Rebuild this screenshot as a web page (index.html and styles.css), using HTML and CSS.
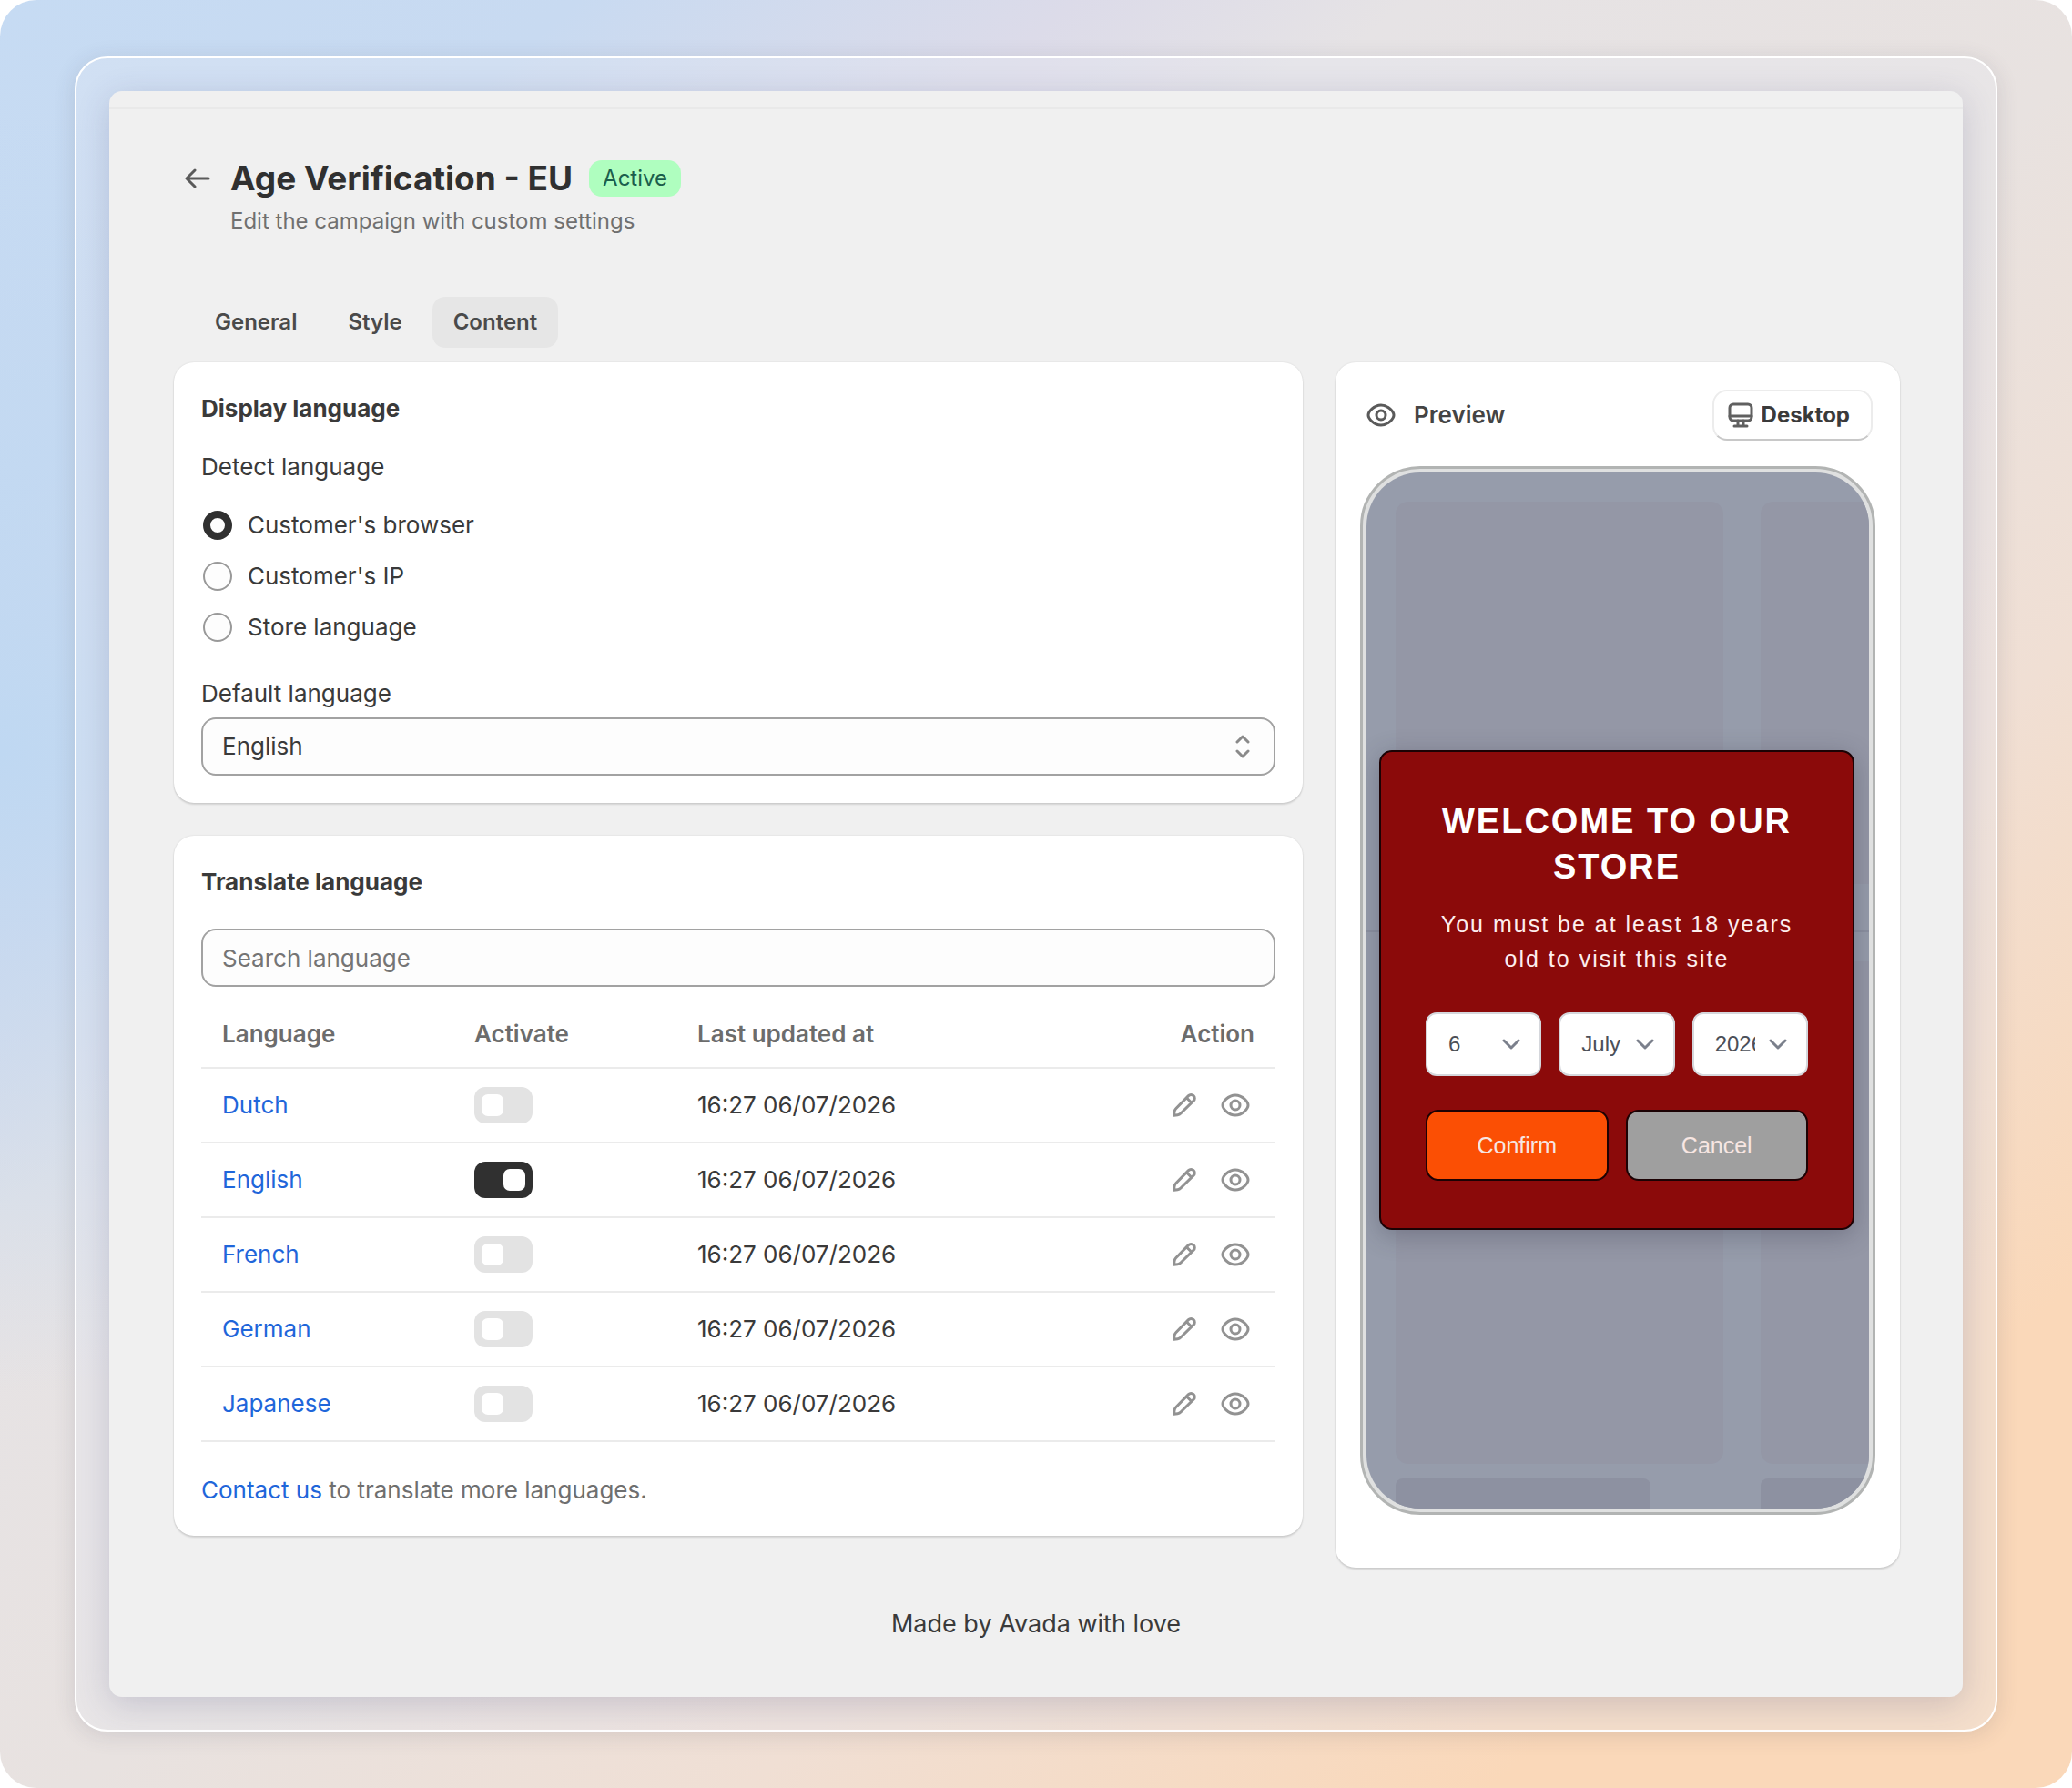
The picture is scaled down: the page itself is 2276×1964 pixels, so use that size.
FILE: index.html
```html
<!DOCTYPE html>
<html lang="en">
<head>
    <meta charset="UTF-8">
    <meta name="viewport" content="width=device-width, initial-scale=1.0">
    <title>Age Verification - EU</title>
    <link rel="stylesheet" href="styles.css">
</head>
<body>
    <!-- shared icons -->
    <svg class="sprite" width="0" height="0" aria-hidden="true">
        <symbol id="icon-eye" viewBox="0 0 32 26">
            <path d="M16 2C8 2 2 9.500 2 13s6 11 14 11 14-7.500 14-11S24 2 16 2z"/>
            <circle cx="16" cy="13" r="5"/>
        </symbol>
        <symbol id="icon-pencil" viewBox="0 0 28 28">
            <path d="M18.500 3.600a3.900 3.900 0 0 1 5.600 0 3.900 3.900 0 0 1 0 5.600L10 23c-1 1-2 1.500-3.400 1.700L2.500 25.300l.5-4.100c.2-1.400.7-2.400 1.700-3.400zM16.500 6l5.300 5.300"/>
        </symbol>
        <symbol id="icon-chevron" viewBox="0 0 20 12">
            <path d="M2 2l8 8 8-8"/>
        </symbol>
    </svg>

    <div class="backdrop">
        <div class="frame">
            <main class="window">
                <div class="top-bar"></div>

                <header class="page-header">
                    <a href="#" class="back" aria-label="Back">
                        <svg width="28" height="24" viewBox="0 0 28 24"><path d="M26 12H3M11 3l-9 9 9 9"/></svg>
                    </a>
                    <div>
                        <div class="title-row">
                            <h1>Age Verification - EU</h1>
                            <span class="badge">Active</span>
                        </div>
                        <p class="subtitle">Edit the campaign with custom settings</p>
                    </div>
                </header>

                <nav class="tabs">
                    <button type="button" class="tab">General</button>
                    <button type="button" class="tab">Style</button>
                    <button type="button" class="tab active">Content</button>
                </nav>

                <div class="layout">
                    <div class="settings">
                        <section class="card">
                            <h2>Display language</h2>
                            <fieldset class="choices">
                                <legend>Detect language</legend>
                                <label class="choice"><input type="radio" name="detect" checked>Customer's browser</label>
                                <label class="choice"><input type="radio" name="detect">Customer's IP</label>
                                <label class="choice"><input type="radio" name="detect">Store language</label>
                            </fieldset>
                            <label class="field-label" for="default-language">Default language</label>
                            <div class="select-wrap">
                                <select id="default-language" class="field">
                                    <option>English</option>
                                    <option>Dutch</option>
                                    <option>French</option>
                                    <option>German</option>
                                    <option>Japanese</option>
                                </select>
                                <svg class="select-arrows" width="18" height="26" viewBox="0 0 18 26"><path d="M3 8l6-6 6 6M3 18l6 6 6-6"/></svg>
                            </div>
                        </section>

                        <section class="card">
                            <h2>Translate language</h2>
                            <input type="text" class="field search" placeholder="Search language" aria-label="Search language">
                            <table class="languages">
                                <thead>
                                    <tr>
                                        <th class="col-language">Language</th>
                                        <th class="col-activate">Activate</th>
                                        <th>Last updated at</th>
                                        <th class="col-action">Action</th>
                                    </tr>
                                </thead>
                                <tbody>
                                    <tr>
                                        <td><a href="#">Dutch</a></td>
                                        <td><input type="checkbox" class="switch" aria-label="Activate Dutch"></td>
                                        <td>16:27 06/07/2026</td>
                                        <td>
                                            <div class="actions">
                                                <button type="button" aria-label="Edit Dutch"><svg class="pencil"><use href="#icon-pencil"/></svg></button>
                                                <button type="button" aria-label="View Dutch"><svg class="eye"><use href="#icon-eye"/></svg></button>
                                            </div>
                                        </td>
                                    </tr>
                                    <tr>
                                        <td><a href="#">English</a></td>
                                        <td><input type="checkbox" class="switch" aria-label="Activate English" checked></td>
                                        <td>16:27 06/07/2026</td>
                                        <td>
                                            <div class="actions">
                                                <button type="button" aria-label="Edit English"><svg class="pencil"><use href="#icon-pencil"/></svg></button>
                                                <button type="button" aria-label="View English"><svg class="eye"><use href="#icon-eye"/></svg></button>
                                            </div>
                                        </td>
                                    </tr>
                                    <tr>
                                        <td><a href="#">French</a></td>
                                        <td><input type="checkbox" class="switch" aria-label="Activate French"></td>
                                        <td>16:27 06/07/2026</td>
                                        <td>
                                            <div class="actions">
                                                <button type="button" aria-label="Edit French"><svg class="pencil"><use href="#icon-pencil"/></svg></button>
                                                <button type="button" aria-label="View French"><svg class="eye"><use href="#icon-eye"/></svg></button>
                                            </div>
                                        </td>
                                    </tr>
                                    <tr>
                                        <td><a href="#">German</a></td>
                                        <td><input type="checkbox" class="switch" aria-label="Activate German"></td>
                                        <td>16:27 06/07/2026</td>
                                        <td>
                                            <div class="actions">
                                                <button type="button" aria-label="Edit German"><svg class="pencil"><use href="#icon-pencil"/></svg></button>
                                                <button type="button" aria-label="View German"><svg class="eye"><use href="#icon-eye"/></svg></button>
                                            </div>
                                        </td>
                                    </tr>
                                    <tr>
                                        <td><a href="#">Japanese</a></td>
                                        <td><input type="checkbox" class="switch" aria-label="Activate Japanese"></td>
                                        <td>16:27 06/07/2026</td>
                                        <td>
                                            <div class="actions">
                                                <button type="button" aria-label="Edit Japanese"><svg class="pencil"><use href="#icon-pencil"/></svg></button>
                                                <button type="button" aria-label="View Japanese"><svg class="eye"><use href="#icon-eye"/></svg></button>
                                            </div>
                                        </td>
                                    </tr>
                                </tbody>
                            </table>
                            <p class="help"><a href="#">Contact us</a> to translate more languages.</p>
                        </section>
                    </div>

                    <section class="card preview">
                        <div class="preview-header">
                            <svg class="eye"><use href="#icon-eye"/></svg>
                            <h2>Preview</h2>
                            <button type="button" class="desktop">
                                <svg width="28" height="28" viewBox="0 0 28 28"><rect x="2" y="2" width="24" height="18" rx="4"/><path d="M2 15h24M11 20v6M17 20v6M7 26h14"/></svg>
                                Desktop
                            </button>
                        </div>

                        <div class="phone">
                            <div class="screen">
                                <div class="skeleton">
                                    <div class="block"></div>
                                    <div class="block"></div>
                                </div>
                                <div class="skeleton second">
                                    <div class="block"></div>
                                    <div class="block"></div>
                                    <div class="line"></div>
                                    <div class="line"></div>
                                </div>
                                <div class="popup">
                                    <h3>WELCOME TO OUR STORE</h3>
                                    <p>You must be at least 18 years old to visit this site</p>
                                    <div class="birthday">
                                        <div class="select-wrap">
                                            <select aria-label="Day"><option>6</option></select>
                                            <svg class="chevron"><use href="#icon-chevron"/></svg>
                                        </div>
                                        <div class="select-wrap">
                                            <select aria-label="Month"><option>July</option></select>
                                            <svg class="chevron"><use href="#icon-chevron"/></svg>
                                        </div>
                                        <div class="select-wrap">
                                            <select aria-label="Year"><option>2026</option></select>
                                            <svg class="chevron"><use href="#icon-chevron"/></svg>
                                        </div>
                                    </div>
                                    <div class="popup-buttons">
                                        <button type="button" class="confirm">Confirm</button>
                                        <button type="button" class="cancel">Cancel</button>
                                    </div>
                                </div>
                            </div>
                        </div>
                    </section>
                </div>

                <footer>Made by Avada with love</footer>
            </main>
        </div>
    </div>
</body>
</html>
```
FILE: styles.css
```css
* {
    box-sizing: border-box;
}

body {
    margin: 0;
    background: #fff;
    color: #3a3a3a;
    font-family: Inter, "Liberation Sans", sans-serif;
    font-size: 26px;
    line-height: 40px;
}

h1, h2, h3, p {
    margin: 0;
}

a {
    color: #1f66da;
    text-decoration: none;
}

button, input, select {
    margin: 0;
    font: inherit;
    color: inherit;
}

svg {
    display: block;
    fill: none;
    stroke: currentColor;
    stroke-width: 3;
    stroke-linecap: round;
    stroke-linejoin: round;
}

.sprite {
    position: absolute;
}

.backdrop {
    min-height: 100vh;
    padding: 62px 82px;
    border-radius: 40px;
    background:
        radial-gradient(ellipse 30% 36% at 0% 42%, #bfd8f2 0%, rgba(191, 216, 242, 0) 100%),
        linear-gradient(to bottom right, #c6dbf3 0%, #c8daf1 14%, #dcdbe9 26%, #e6e3e5 34%, #e8e2e0 52%, #f0dfd4 68%, #fad8b9 86%);
}

.frame {
    padding: 36px;
    border: 2px solid #fff;
    border-radius: 36px;
    background: rgba(232, 234, 244, 0.3);
    box-shadow: 0 4px 24px rgba(60, 60, 80, 0.14);
}

.window {
    padding-bottom: 60px;
    border-radius: 14px;
    background: #f0f0f0;
    box-shadow: 0 8px 36px rgba(60, 60, 110, 0.2);
}

.top-bar {
    height: 20px;
    border-bottom: 2px solid #e9e9e9;
}

/* header */
.page-header {
    display: flex;
    gap: 22px;
    padding: 52px 70px 0 83px;
}

.back {
    display: flex;
    align-items: center;
    height: 48px;
    color: #5a5a5a;
}

.title-row {
    display: flex;
    align-items: center;
    gap: 18px;
}

h1 {
    color: #303030;
    font-size: 37px;
    line-height: 48px;
    font-weight: 700;
}

.badge {
    padding: 0 15px;
    border-radius: 14px;
    background: #affebf;
    color: #1b5e4c;
    font-size: 24px;
}

.subtitle {
    font-size: 24px;
    line-height: 46px;
    color: #707070;
}

.tabs {
    display: flex;
    gap: 10px;
    padding: 60px 93px 16px;
}

.tab {
    padding: 8px 23px;
    border: 0;
    border-radius: 14px;
    background: none;
    font-size: 24px;
    font-weight: 600;
    color: #4a4a4a;
}

.tab.active {
    background: #e6e6e6;
}

/* cards */
.layout {
    display: grid;
    grid-template-columns: minmax(0, 2fr) minmax(0, 1fr);
    gap: 36px;
    align-items: start;
    padding: 0 69px 0 71px;
}

.settings {
    display: grid;
    gap: 36px;
}

.card {
    padding: 31px 30px 30px;
    border-radius: 22px;
    background: #fff;
    box-shadow: 0 2px 2px rgba(0, 0, 0, 0.12), 0 0 2px rgba(0, 0, 0, 0.12);
}

h2 {
    color: #3a3a3a;
    font-size: 26px;
    line-height: 40px;
    font-weight: 650;
}

.choices {
    display: grid;
    gap: 16px;
    margin: 24px 0 33px;
    padding: 0;
    border: 0;
}

.choices legend {
    padding: 0;
    margin-bottom: 24px;
}

.choice {
    display: flex;
    align-items: center;
    gap: 17px;
    padding-left: 2px;
}

.choice input {
    appearance: none;
    width: 32px;
    height: 32px;
    border: 2px solid #999;
    border-radius: 50%;
    background: #fdfdfd;
}

.choice input:checked {
    border: 8px solid #303030;
}

.field-label {
    display: block;
    margin-bottom: 6px;
}

.field {
    appearance: none;
    display: block;
    width: 100%;
    height: 64px;
    padding: 0 21px;
    border: 2px solid #a2a2a2;
    border-radius: 16px;
    background: #fdfdfd;
}

.select-wrap {
    position: relative;
}

.select-arrows {
    position: absolute;
    top: 19px;
    right: 27px;
    color: #8a8a8a;
}

.search {
    margin: 31px 0 16px;
}

.search::placeholder {
    color: #757575;
    opacity: 1;
}

/* languages */
.languages {
    width: 100%;
    border-collapse: collapse;
    table-layout: fixed;
}

.languages th,
.languages td {
    height: 82px;
    padding: 0 23px;
    border-bottom: 2px solid #ebebeb;
    text-align: left;
}

.languages th {
    height: 73px;
    color: #6c6c6c;
    font-weight: 600;
}

.col-language {
    width: 277px;
}

.col-activate {
    width: 245px;
}

.languages .col-action {
    width: 220px;
    text-align: right;
}

.switch {
    appearance: none;
    display: block;
    width: 64px;
    height: 40px;
    padding: 8px;
    border-radius: 12px;
    background: #e3e3e3;
}

.switch::before {
    content: "";
    display: block;
    width: 24px;
    height: 24px;
    border-radius: 7px;
    background: #fff;
}

.switch:checked {
    background: #303030;
}

.switch:checked::before {
    margin-left: auto;
}

.actions {
    display: flex;
    justify-content: flex-end;
    align-items: center;
    gap: 26px;
    padding-right: 5px;
    color: #929292;
}

.actions button {
    padding: 0;
    border: 0;
    background: none;
}

.eye {
    width: 32px;
    height: 26px;
}

.pencil {
    width: 28px;
    height: 28px;
}

.help {
    margin-top: 33px;
    color: #6f6f6f;
}

/* preview */
.preview {
    padding: 30px 27px 58px;
}

.preview-header {
    display: flex;
    align-items: center;
    gap: 20px;
    padding: 0 3px 0 7px;
    margin-bottom: 28px;
    color: #5a5a5a;
}

.preview-header h2 {
    color: #444;
    font-weight: 600;
}

.desktop {
    display: flex;
    align-items: center;
    gap: 9px;
    height: 56px;
    margin-left: auto;
    padding: 0 23px 0 15px;
    border: 2px solid #ececec;
    border-bottom-color: #c8c8c8;
    border-radius: 16px;
    background: #fff;
    color: #3a3a3a;
    font-size: 24px;
    font-weight: 700;
}

.desktop svg {
    color: #606060;
}

.phone {
    border: 3px solid #b2b4b3;
    border-radius: 66px;
    background: #dfe0e0;
    padding: 4px;
}

.screen {
    position: relative;
    height: 1138px;
    overflow: hidden;
    border-radius: 59px;
    background: #969cab;
}

.skeleton {
    display: grid;
    grid-template-columns: 360px 360px;
    grid-template-rows: 420px;
    gap: 16px 41px;
    padding: 32px;
    height: 503px;
}

.second {
    grid-template-rows: 552px 60px;
    height: auto;
    border-top: 2px solid #8b90a0;
}

.block {
    border-radius: 14px;
    background: #9497a6;
}

.line {
    width: 280px;
    border-radius: 8px;
    background: #8d91a1;
}

.popup {
    position: absolute;
    top: 305px;
    left: 14px;
    right: 16px;
    padding: 51px 49px 52px;
    border: 2px solid #1c0204;
    border-radius: 14px;
    background: #8b0a0a;
    box-shadow: 0 6px 28px rgba(40, 40, 60, 0.3);
    color: #fff;
    font-family: "Liberation Sans", Arial, sans-serif;
    text-align: center;
}

.popup h3 {
    font-size: 38px;
    line-height: 50px;
    letter-spacing: 2px;
}

.popup p {
    margin: 19px 0 40px;
    font-size: 25px;
    line-height: 38px;
    letter-spacing: 2px;
    color: #fdeeee;
}

.birthday {
    display: grid;
    grid-template-columns: repeat(3, minmax(0, 1fr));
    gap: 19px;
}

.birthday select {
    appearance: none;
    display: block;
    width: 100%;
    height: 70px;
    padding: 0 56px 0 23px;
    border: 2px solid #d5d7dc;
    border-radius: 12px;
    background: #fff;
    color: #4b4f58;
    font-size: 24px;
}

.chevron {
    position: absolute;
    top: 29px;
    right: 23px;
    width: 20px;
    height: 12px;
    color: #7b808c;
}

.popup-buttons {
    display: grid;
    grid-template-columns: 1fr 1fr;
    gap: 19px;
    margin-top: 37px;
}

.popup-buttons button {
    height: 78px;
    border: 2px solid #1c0204;
    border-radius: 14px;
    color: #f7e6e2;
    font-size: 25px;
}

.popup-buttons .confirm {
    background: #fb4f04;
}

.popup-buttons .cancel {
    background: #9f9f9f;
}

footer {
    margin-top: 42px;
    font-size: 27px;
    text-align: center;
}
```
